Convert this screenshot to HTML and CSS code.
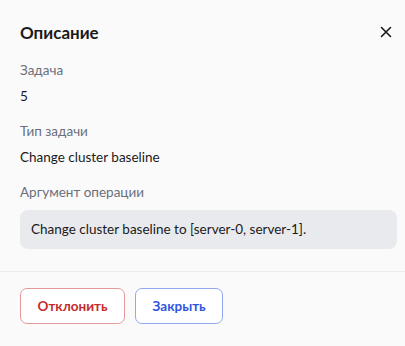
FILE: index.html
```html
<!DOCTYPE html>
<html lang="ru">
<head>
  <meta charset="UTF-8">
  <title>Описание</title>
  <link rel="stylesheet" href="styles.css">
</head>
<body>
  <div class="dialog">
    <div class="dialog-header">
      <h2>Описание</h2>
      <button class="close-btn" aria-label="Закрыть">
        <svg width="12" height="12" viewBox="0 0 12 12"><path d="M1.5 1.5 L10.5 10.5 M10.5 1.5 L1.5 10.5" stroke="#1a1a1a" stroke-width="1.6" stroke-linecap="round"/></svg>
      </button>
    </div>

    <div class="dialog-body">
      <div class="field">
        <div class="field-label">Задача</div>
        <div class="field-value">5</div>
      </div>
      <div class="field">
        <div class="field-label">Тип задачи</div>
        <div class="field-value">Change cluster baseline</div>
      </div>
      <div class="field">
        <div class="field-label">Аргумент операции</div>
        <div class="field-box">Change cluster baseline to [server-0, server-1].</div>
      </div>
    </div>

    <div class="dialog-footer">
      <button class="btn btn-danger">Отклонить</button>
      <button class="btn btn-primary">Закрыть</button>
    </div>
  </div>
</body>
</html>
```

FILE: styles.css
```css
body {
  margin: 0;
  font-family: 'Lato', 'Open Sans', sans-serif;
  background: #fafafa;
  color: #1a1a1a;
}

.dialog {
  width: 405px;
}

.dialog-header {
  display: flex;
  justify-content: space-between;
  align-items: center;
  padding: 20px 13px 0 20px;
  height: 24px;
}

.dialog-header h2 {
  margin: 0;
  font-size: 17px;
  font-weight: 700;
}

.close-btn {
  background: transparent;
  border: none;
  padding: 0;
  width: 12px;
  height: 12px;
  display: flex;
  cursor: pointer;
}

.dialog-body {
  padding: 17px 8px 22px 20px;
}

.field {
  margin-bottom: 17px;
}

.field:last-child {
  margin-bottom: 0;
}

.field-label {
  font-size: 13.5px;
  color: #6b6f7a;
  line-height: 18px;
}

.field-value {
  margin-top: 8px;
  font-size: 13.5px;
  line-height: 18px;
}

.field-box {
  margin-top: 9px;
  background: #e9eaee;
  border-radius: 8px;
  padding: 11px 11px;
  font-size: 13.5px;
  line-height: 17px;
}

.dialog-footer {
  border-top: 1px solid #ececef;
  padding: 16px 20px;
  display: flex;
  gap: 10px;
}

.btn {
  height: 36px;
  padding: 0 16.5px;
  border-radius: 7px;
  background: #fff;
  font-family: inherit;
  font-size: 13.5px;
  font-weight: 700;
  cursor: pointer;
}

.btn-danger {
  color: #c42b2b;
  border: 1px solid #e59a9a;
}

.btn-primary {
  color: #2f55e0;
  border: 1px solid #92a8f2;
}
```
